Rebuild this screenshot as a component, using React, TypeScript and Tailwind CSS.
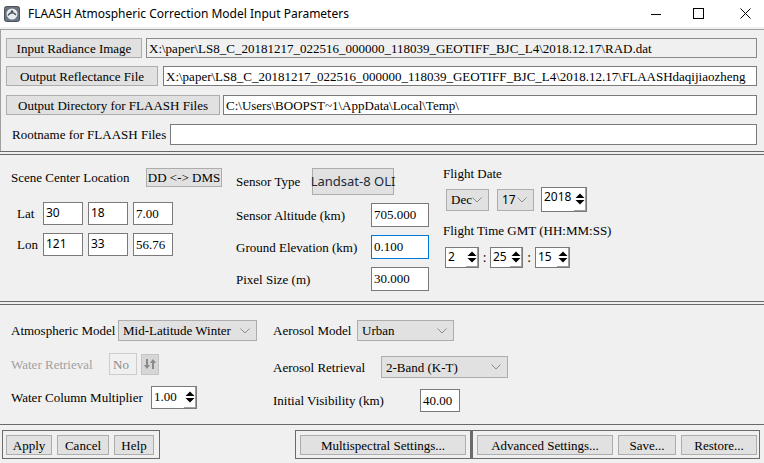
import React from "react";

const M = "font-['Liberation_Serif',serif] text-[13px] tracking-[0px] leading-none whitespace-pre";
const P = "font-['Liberation_Serif',serif] text-[13px] tracking-[0px] leading-none whitespace-pre";
const S = "font-['Noto_Sans',sans-serif] text-[12px] leading-none whitespace-pre";

function Btn({ children, className = "" }: { children: React.ReactNode; className?: string }) {
  return (
    <div className={`flex items-center justify-center bg-[#e1e1e1] border border-[#adadad] shrink-0 ${M} ${className}`}>
      {children}
    </div>
  );
}

function Field({ children, className = "", font = P }: { children?: React.ReactNode; className?: string; font?: string }) {
  return (
    <div className={`flex items-start pt-[4px] pl-[2px] bg-white border border-[#7a7a7a] ${font} ${className}`}>
      {children}
    </div>
  );
}

function Arrows() {
  return (
    <svg width="10" height="14" viewBox="0 0 10 14">
      <polygon points="0.5,6 5,1.5 9.5,6" fill="#000" />
      <polygon points="0.5,8 5,12.5 9.5,8" fill="#000" />
    </svg>
  );
}

function Spin({ v, className = "", font = S }: { v: string; className?: string; font?: string }) {
  return (
    <div className={`flex bg-white border border-[#7a7a7a] ${className}`}>
      <div className={`flex-1 pl-[2px] pt-[3px] ${font}`}>{v}</div>
      <div className="w-[12px] flex items-center justify-center border-r border-b border-[#a0a0a0]">
        <Arrows />
      </div>
    </div>
  );
}

function Chevron() {
  return (
    <svg width="10" height="6" viewBox="0 0 10 6">
      <polyline points="0.5,0.5 5,5 9.5,0.5" fill="none" stroke="#8a8a8a" strokeWidth="1" />
    </svg>
  );
}

function Select({ v, className = "", font = M }: { v: string; className?: string; font?: string }) {
  return (
    <div className={`flex items-center justify-between bg-[#e1e1e1] border border-[#adadad] pl-[4px] pr-[6px] shrink-0 ${className}`}>
      <span className={font}>{v}</span>
      <Chevron />
    </div>
  );
}

function Sep() {
  return <div className="h-[4px] border-t border-b border-[#6a6a6a] shrink-0" />;
}

function Label({ children, className = "" }: { children: React.ReactNode; className?: string }) {
  return <span className={`${M} shrink-0 ${className}`}>{children}</span>;
}

export default function App() {
  return (
    <div className="w-[764px] h-[463px] bg-[#f0f0f0] text-black flex flex-col overflow-hidden">
      {/* Title bar */}
      <div className="h-[27px] bg-white flex items-center shrink-0">
        <div className="pl-[4px] pr-[8px] flex items-center">
          <svg width="16" height="16" viewBox="0 0 16 16">
            <rect x="0.5" y="0.5" width="15" height="15" rx="2" fill="#6b7480" stroke="#4a515a" />
            <circle cx="8" cy="8" r="5.5" fill="#e8ecf0" />
            <path d="M4 9.5 C6 6, 10 6, 12 9" stroke="#4a515a" strokeWidth="1.4" fill="none" />
            <circle cx="8" cy="5.5" r="1.3" fill="#4a515a" />
          </svg>
        </div>
        <span className="font-['Noto_Sans',sans-serif] text-[12px] text-black">
          FLAASH Atmospheric Correction Model Input Parameters
        </span>
        <div className="ml-auto flex items-center pr-[13px]">
          <svg width="10" height="10" viewBox="0 0 10 10">
            <line x1="0" y1="5.5" x2="10" y2="5.5" stroke="#000" strokeWidth="1" />
          </svg>
          <svg width="11" height="11" viewBox="0 0 11 11" className="ml-[32px]">
            <rect x="0.5" y="0.5" width="10" height="10" fill="none" stroke="#000" strokeWidth="1" />
          </svg>
          <svg width="11" height="11" viewBox="0 0 11 11" className="ml-[36px]">
            <line x1="0.5" y1="0.5" x2="10.5" y2="10.5" stroke="#000" strokeWidth="1" />
            <line x1="10.5" y1="0.5" x2="0.5" y2="10.5" stroke="#000" strokeWidth="1" />
          </svg>
        </div>
      </div>

      {/* Files section */}
      <div className="mt-[2px] border-t border-l border-[#a0a0a0] pl-[5px] pr-[7px] pt-[8px] pb-[6px] flex flex-col gap-[8px] shrink-0">
        <div className="flex items-center gap-[4px] h-[20px]">
          <Btn className="w-[136px] h-[20px]">Input Radiance Image</Btn>
          <div className={`flex-1 h-[20px] flex items-center pl-[2px] bg-[#f0f0f0] border border-[#8a8a8a] ${P}`}>
            X:\paper\LS8_C_20181217_022516_000000_118039_GEOTIFF_BJC_L4\2018.12.17\RAD.dat
          </div>
        </div>
        <div className="flex items-center gap-[5px] h-[20px]">
          <Btn className="w-[152px] h-[20px]">Output Reflectance File</Btn>
          <div className={`flex-1 h-[20px] flex items-center pl-[2px] bg-white border border-[#7a7a7a] ${P}`}>
            X:\paper\LS8_C_20181217_022516_000000_118039_GEOTIFF_BJC_L4\2018.12.17\FLAASHdaqijiaozheng
          </div>
        </div>
        <div className="mt-[1px] flex items-center gap-[3px] h-[20px]">
          <Btn className="w-[214px] h-[20px]">Output Directory for FLAASH Files</Btn>
          <div className={`flex-1 h-[20px] flex items-center pl-[2px] bg-white border border-[#7a7a7a] ${P}`}>
            C:\Users\BOOPST~1\AppData\Local\Temp\
          </div>
        </div>
        <div className="mt-[1px] flex items-center pl-[6px] h-[21px]">
          <Label className="w-[158px]">Rootname for FLAASH Files</Label>
          <div className="flex-1 h-[21px] bg-white border border-[#7a7a7a]" />
        </div>
      </div>

      <Sep />

      {/* Scene / sensor / date section */}
      <div className="h-[146px] flex shrink-0">
        <div className="w-[236px] pl-[11px] pt-[13px] flex flex-col">
          <div className="flex items-center">
            <Label className="w-[135px]">Scene Center Location</Label>
            <Btn className="w-[76px] h-[19px] text-[12px]">DD {"<->"} DMS</Btn>
          </div>
          <div className="mt-[15px] flex items-center pl-[6px]">
            <Label className="w-[26px]">Lat</Label>
            <div className="flex gap-[5px]">
              <Field className="w-[40px] h-[23px]" font={S}>30</Field>
              <Field className="w-[40px] h-[23px]" font={S}>18</Field>
              <Field className="w-[40px] h-[23px]">7.00</Field>
            </div>
          </div>
          <div className="mt-[8px] flex items-center pl-[6px]">
            <Label className="w-[26px]">Lon</Label>
            <div className="flex gap-[5px]">
              <Field className="w-[40px] h-[23px]" font={S}>121</Field>
              <Field className="w-[40px] h-[23px]" font={S}>33</Field>
              <Field className="w-[40px] h-[23px]">56.76</Field>
            </div>
          </div>
        </div>

        <div className="w-[207px] pt-[13px] flex flex-col">
          <div className="flex items-center">
            <Label className="w-[76px]">Sensor Type</Label>
            <div className="w-[82px] h-[27px] flex items-center justify-center bg-[#e1e1e1] border border-[#adadad]">
              <span className="font-['Noto_Sans',sans-serif] text-[13px] text-[#1a2a3a] whitespace-pre">Landsat-8 OLI</span>
            </div>
          </div>
          <div className="mt-[8px] flex flex-col gap-[8px]">
            <div className="flex items-center">
              <Label className="w-[135px]">Sensor Altitude (km)</Label>
              <Field className="w-[58px] h-[24px]">705.000</Field>
            </div>
            <div className="flex items-center">
              <Label className="w-[135px]">Ground Elevation (km)</Label>
              <Field className="w-[58px] h-[24px] border-[#0078d7]">0.100</Field>
            </div>
            <div className="flex items-center">
              <Label className="w-[135px]">Pixel Size (m)</Label>
              <Field className="w-[58px] h-[24px]">30.000</Field>
            </div>
          </div>
        </div>

        <div className="flex-1 pt-[12px] flex flex-col">
          <Label>Flight Date</Label>
          <div className="mt-[7px] ml-[3px] flex items-center">
            <Select v="Dec" className="w-[43px] h-[22px]" />
            <Select v="17" font={S} className="w-[37px] h-[22px] ml-[8px]" />
            <Spin v="2018" className="w-[46px] h-[25px] ml-[7px]" />
          </div>
          <Label className="mt-[12px]">Flight Time GMT (HH:MM:SS)</Label>
          <div className="mt-[10px] ml-[2px] flex items-center">
            <Spin v="2" className="w-[34px] h-[21px]" />
            <span className={`${S} w-[11px] text-center`}>:</span>
            <Spin v="25" className="w-[33px] h-[21px]" />
            <span className={`${S} w-[12px] text-center`}>:</span>
            <Spin v="15" className="w-[35px] h-[21px]" />
          </div>
        </div>
      </div>

      <Sep />

      {/* Atmosphere section */}
      <div className="h-[119px] flex shrink-0">
        <div className="w-[273px] pl-[11px] pt-[15px] flex flex-col">
          <div className="flex items-center">
            <Label className="w-[107px]">Atmospheric Model</Label>
            <Select v="Mid-Latitude Winter" className="w-[139px] h-[21px]" />
          </div>
          <div className="mt-[12px] flex items-center">
            <Label className="w-[98px] text-[#a0a0a0]">Water Retrieval</Label>
            <div className={`w-[28px] h-[22px] pt-[4px] pl-[3px] border border-[#cccccc] bg-[#f0f0f0] ${M} text-[#8a8a8a]`}>No</div>
            <div className="ml-[4px] w-[18px] h-[21px] flex items-center justify-center bg-[#d6d6d6] border border-[#c4c4c4]">
              <svg width="12" height="12" viewBox="0 0 12 12">
                <rect x="2" y="1" width="2" height="7" fill="#8a8a8a" />
                <polygon points="0,7 6,7 3,11" fill="#8a8a8a" />
                <rect x="8" y="4" width="2" height="7" fill="#8a8a8a" />
                <polygon points="6,5 12,5 9,1" fill="#8a8a8a" />
              </svg>
            </div>
          </div>
          <div className="mt-[11px] flex items-center">
            <Label className="w-[140px]">Water Column Multiplier</Label>
            <Spin v="1.00" font={P} className="w-[46px] h-[23px]" />
          </div>
        </div>
        <div className="flex-1 pt-[15px] flex flex-col">
          <div className="flex items-center">
            <Label className="w-[84px]">Aerosol Model</Label>
            <Select v="Urban" className="w-[97px] h-[21px]" />
          </div>
          <div className="mt-[15px] flex items-center">
            <Label className="w-[108px]">Aerosol Retrieval</Label>
            <Select v="2-Band (K-T)" className="w-[127px] h-[22px]" />
          </div>
          <div className="mt-[11px] flex items-center">
            <Label className="w-[147px]">Initial Visibility (km)</Label>
            <Field className="w-[40px] h-[23px]">40.00</Field>
          </div>
        </div>
      </div>

      {/* Bottom buttons */}
      <div className="border-t border-[#6a6a6a] flex-1 pt-[5px] pl-[2px] pr-[4px] flex justify-between items-start">
        <div className="border border-[#6a6a6a] flex gap-[5px] pl-[3px] pr-[5px] pt-[4px] pb-[3px]">
          <Btn className="w-[46px] h-[20px]">Apply</Btn>
          <Btn className="w-[52px] h-[20px]">Cancel</Btn>
          <Btn className="w-[40px] h-[20px]">Help</Btn>
        </div>
        <div className="flex">
          <div className="border border-[#6a6a6a] flex px-[4px] pt-[4px] pb-[3px]">
            <Btn className="w-[166px] h-[20px]">Multispectral Settings...</Btn>
          </div>
          <div className="border border-[#6a6a6a] border-l-2 flex gap-[5px] pl-[4px] pr-[2px] pt-[4px] pb-[3px]">
            <Btn className="w-[136px] h-[20px]">Advanced Settings...</Btn>
            <Btn className="w-[58px] h-[20px]">Save...</Btn>
            <Btn className="w-[76px] h-[20px]">Restore...</Btn>
          </div>
        </div>
      </div>
    </div>
  );
}
